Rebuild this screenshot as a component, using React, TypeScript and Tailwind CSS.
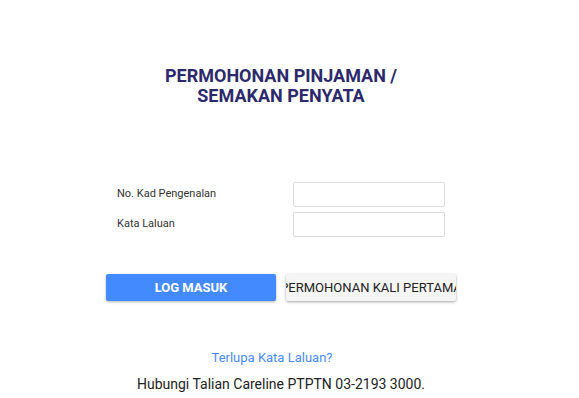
import React from 'react';

export default function App() {
  return (
    <div className="min-h-[398px] w-full bg-white font-['Roboto',sans-serif]">
      <div className="w-[350px] ml-[106px] pt-[66px]">
        <h1 className="text-center text-[18px] leading-[20px] font-bold text-[#2c2a6b]">
          PERMOHONAN PINJAMAN /<br />SEMAKAN PENYATA
        </h1>

        <div className="mt-[76px] flex flex-col gap-[5px]">
          <div className="flex items-center">
            <label className="w-[187px] pl-[11px] text-[11px] text-[#333]">No. Kad Pengenalan</label>
            <input type="text" className="w-[152px] h-[25px] border border-[#dcdcdc] rounded-[2px] outline-none px-1 text-[12px]" />
          </div>
          <div className="flex items-center">
            <label className="w-[187px] pl-[11px] text-[11px] text-[#333]">Kata Laluan</label>
            <input type="password" className="w-[152px] h-[25px] border border-[#dcdcdc] rounded-[2px] outline-none px-1 text-[12px]" />
          </div>
        </div>

        <div className="mt-[37px] flex gap-[10px]">
          <button className="w-[170px] h-[27px] rounded-[2px] bg-[#448aff] text-white text-[13px] font-bold shadow-[0_1px_3px_rgba(0,0,0,0.3)]">
            LOG MASUK
          </button>
          <button className="w-[170px] h-[27px] rounded-[2px] bg-[#f5f5f5] text-[#222] text-[13px] font-normal shadow-[0_1px_3px_rgba(0,0,0,0.35)] flex justify-center items-center overflow-hidden whitespace-nowrap">
            <span>PERMOHONAN KALI PERTAMA</span>
          </button>
        </div>

        <div className="mt-[44px] text-center">
          <div className="pr-[18px]">
            <a href="#" className="text-[13px] leading-[18px] text-[#4a8cf7]">Terlupa Kata Laluan?</a>
          </div>
          <p className="mt-[6px] text-[14px] leading-[18px] text-[#222]">Hubungi Talian Careline PTPTN 03-2193 3000.</p>
        </div>
      </div>
    </div>
  );
}
